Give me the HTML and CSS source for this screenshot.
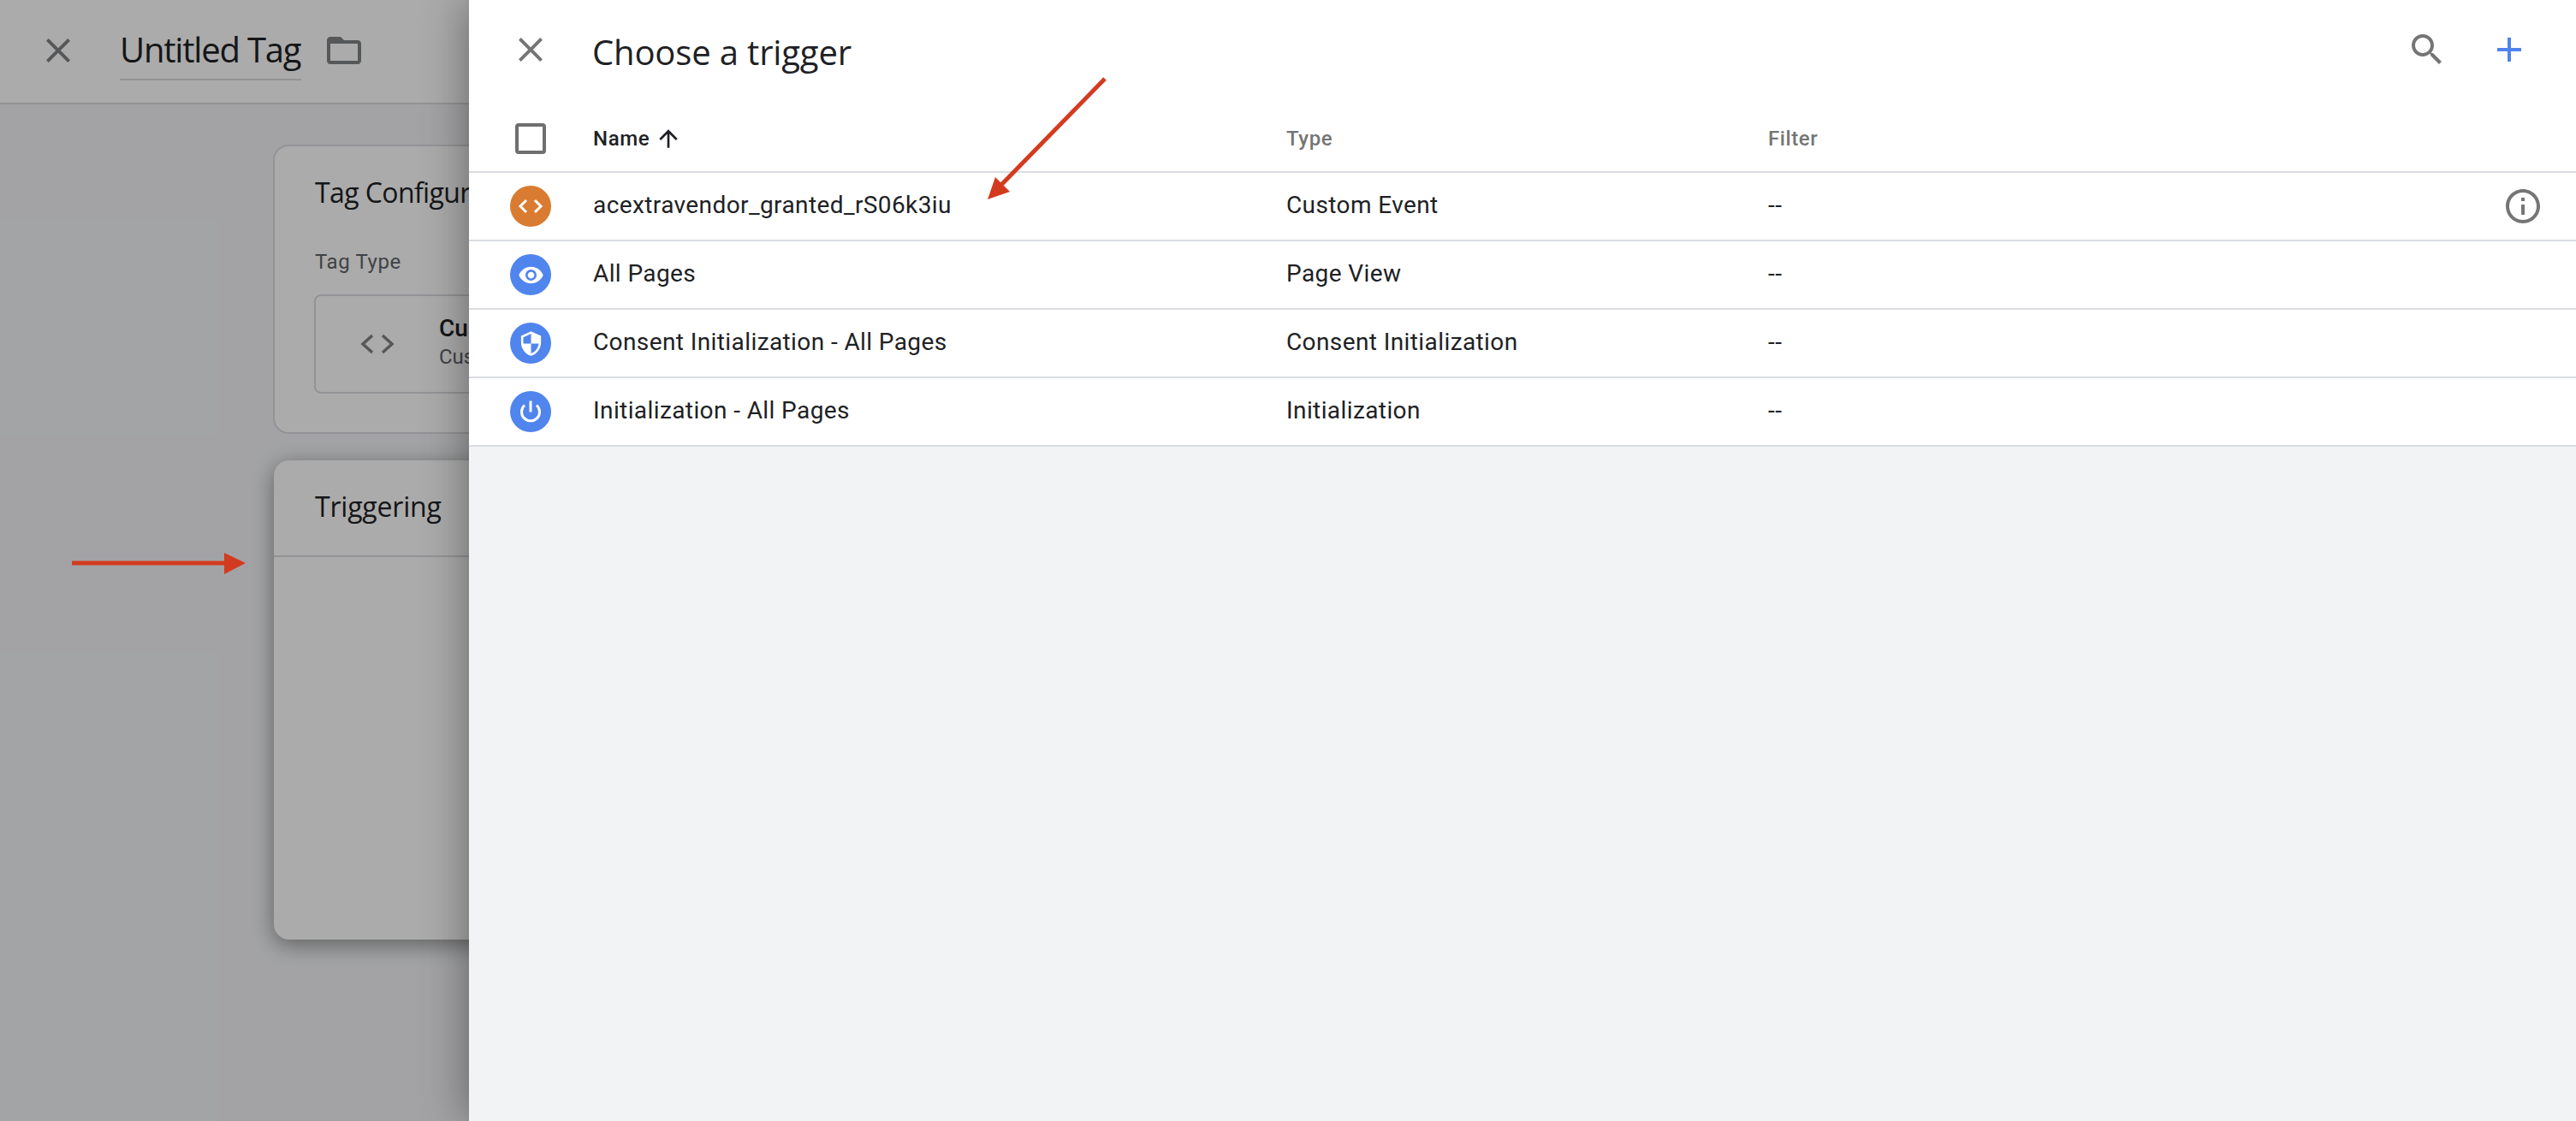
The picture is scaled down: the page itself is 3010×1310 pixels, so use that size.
FILE: index.html
```html
<!DOCTYPE html>
<html lang="en">
<head>
<meta charset="utf-8">
<title>Choose a trigger</title>
<link rel="stylesheet" href="styles.css">
</head>
<body>
<div class="app">
  <div class="page">
    <header class="page-bar">
      <svg class="icon muted" viewBox="0 0 24 24"><path d="M19 6.41L17.59 5 12 10.59 6.41 5 5 6.41 10.59 12 5 17.59 6.41 19 12 13.41 17.59 19 19 17.59 13.41 12z"/></svg>
      <div class="tag-name">Untitled Tag</div>
      <svg class="icon muted folder" viewBox="0 0 24 24"><path d="M20 6h-8l-2-2H4c-1.1 0-1.99.9-1.99 2L2 18c0 1.1.9 2 2 2h16c1.1 0 2-.9 2-2V8c0-1.1-.9-2-2-2zm0 12H4V8h16v10z"/></svg>
    </header>
    <main class="page-main">
      <section class="card config">
        <h2 class="card-title">Tag Configuration</h2>
        <div class="field-label">Tag Type</div>
        <div class="type-box">
          <svg class="type-icon" viewBox="0 0 40 24"><path d="M14 2L3 12l11 10M26 2l11 10-11 10"/></svg>
          <div class="type-text">
            <div class="type-name">Custom HTML</div>
            <div class="type-sub">Custom HTML Tag</div>
          </div>
        </div>
      </section>
      <section class="card trigger">
        <h2 class="trigger-title">Triggering</h2>
      </section>
    </main>
  </div>
  <div class="scrim"></div>
  <aside class="drawer">
    <div class="drawer-bar">
      <svg class="icon grey" viewBox="0 0 24 24"><path d="M19 6.41L17.59 5 12 10.59 6.41 5 5 6.41 10.59 12 5 17.59 6.41 19 12 13.41 17.59 19 19 17.59 13.41 12z"/></svg>
      <h1 class="drawer-title">Choose a trigger</h1>
      <div class="drawer-actions">
        <svg class="icon grey" viewBox="0 0 24 24"><path d="M15.5 14h-.79l-.28-.27C15.41 12.59 16 11.11 16 9.5 16 5.91 13.09 3 9.5 3S3 5.91 3 9.5 5.91 16 9.5 16c1.61 0 3.09-.59 4.23-1.57l.27.28v.79l5 4.99L20.49 19l-4.99-5zm-6 0C7.01 14 5 11.99 5 9.5S7.01 5 9.5 5 14 7.01 14 9.5 11.99 14 9.5 14z"/></svg>
        <svg class="icon blue" viewBox="0 0 24 24"><path d="M19 13h-6v6h-2v-6H5v-2h6V5h2v6h6v2z"/></svg>
      </div>
    </div>
    <div class="table">
      <div class="row head">
        <div class="cell-icon"><span class="checkbox"></span></div>
        <div class="th th-name">Name<svg class="sort" viewBox="0 0 24 24"><path d="M4 12l1.41 1.41L11 7.83V20h2V7.83l5.58 5.59L20 12l-8-8-8 8z"/></svg></div>
        <div class="th">Type</div>
        <div class="th">Filter</div>
      </div>
      <div class="row">
        <div class="cell-icon"><span class="badge orange"><svg class="code" viewBox="0 0 48 48"><path d="M19 17l-7 7 7 7M29 17l7 7-7 7"/></svg></span></div>
        <div class="cell">acextravendor_granted_rS06k3iu</div>
        <div class="cell">Custom Event</div>
        <div class="cell">--</div>
        <svg class="icon grey info" viewBox="0 0 24 24"><path d="M11 7h2v2h-2zm0 4h2v6h-2zm1-9C6.48 2 2 6.48 2 12s4.48 10 10 10 10-4.48 10-10S17.52 2 12 2zm0 18c-4.41 0-8-3.59-8-8s3.59-8 8-8 8 3.59 8 8-3.59 8-8 8z"/></svg>
      </div>
      <div class="row">
        <div class="cell-icon"><span class="badge"><svg class="glyph" viewBox="0 0 24 24"><path d="M12 4.5C7 4.5 2.73 7.61 1 12c1.73 4.39 6 7.5 11 7.5s9.27-3.11 11-7.5c-1.73-4.39-6-7.5-11-7.5zM12 17c-2.76 0-5-2.24-5-5s2.24-5 5-5 5 2.24 5 5-2.24 5-5 5zm0-8c-1.66 0-3 1.34-3 3s1.34 3 3 3 3-1.34 3-3-1.34-3-3-3z"/></svg></span></div>
        <div class="cell">All Pages</div>
        <div class="cell">Page View</div>
        <div class="cell">--</div>
      </div>
      <div class="row">
        <div class="cell-icon"><span class="badge"><svg class="glyph" viewBox="0 0 24 24"><path d="M12 1L3 5v6c0 5.55 3.84 10.74 9 12 5.16-1.26 9-6.45 9-12V5l-9-4zm0 10.99h7c-.53 4.12-3.28 7.79-7 8.94V12H5V6.3l7-3.11v8.8z"/></svg></span></div>
        <div class="cell">Consent Initialization - All Pages</div>
        <div class="cell">Consent Initialization</div>
        <div class="cell">--</div>
      </div>
      <div class="row">
        <div class="cell-icon"><span class="badge"><svg class="power" viewBox="0 0 48 48"><path d="M24 11.500v13M17 16.500a10.500 10.500 0 1 0 14 0"/></svg></span></div>
        <div class="cell">Initialization - All Pages</div>
        <div class="cell">Initialization</div>
        <div class="cell">--</div>
      </div>
    </div>
  </aside>
  <svg class="annotations" viewBox="0 0 3010 1310">
    <path class="shaft" d="M84 658H264"/>
    <polygon class="head" points="262,646 287,658 262,671"/>
    <path class="shaft" d="M1291 92L1168 218"/>
    <polygon class="head" points="1154,233 1163,207 1180,224"/>
  </svg>
</div>
</body>
</html>
```
FILE: styles.css
```css
* { box-sizing: border-box; }
html, body { margin: 0; padding: 0; }
body { background: #f3f4f6; color: #202124; font-family: Roboto, "Liberation Sans", sans-serif; }
h1, h2 { margin: 0; font-weight: 400; }

.app { position: relative; width: 3010px; height: 1310px; overflow: hidden; background: #f3f4f6; }

.icon { width: 48px; height: 48px; flex: none; display: block; }
.grey { fill: #757575; }
.muted { fill: #808285; }
.blue { fill: #4f83ee; }

.page { display: flex; flex-direction: column; height: 100%; }
.page-bar { display: flex; align-items: center; height: 122px; padding: 0 0 2px 44px; background: #fff; border-bottom: 2px solid #dadce0; }
.tag-name { margin: 6px 0 0 48px; width: 212px; height: 64px; font-family: "Open Sans", sans-serif; font-size: 40px; line-height: 56px; letter-spacing: -1.2px; white-space: nowrap; border-bottom: 2px solid #dadce0; }
.folder { margin-left: 26px; }

.page-main { display: flex; flex-direction: column; gap: 31px; padding: 47px 0 0 319px; }
.card { width: 2300px; background: #fff; border-radius: 18px; }
.config { height: 338px; border: 2px solid #dadce0; padding: 32px 47px 0; }
.card-title, .trigger-title { font-family: "Open Sans", sans-serif; font-size: 32px; line-height: 44px; letter-spacing: -.6px; }
.field-label { margin-top: 44px; font-size: 24px; line-height: 30px; color: #5f6368; letter-spacing: .6px; }
.type-box { display: flex; align-items: center; height: 116px; margin: 23px 0 0 -1px; border: 2px solid #dadce0; border-radius: 8px; }
.type-icon { width: 40px; height: 24px; margin-left: 52px; fill: none; stroke: #808285; stroke-width: 3.500; flex: none; }
.type-text { margin: 0 0 6px 52px; }
.type-name { font-size: 28px; line-height: 36px; font-weight: 500; }
.type-sub { font-size: 24px; line-height: 30px; color: #5f6368; }

.trigger { height: 560px; margin-left: 1px; box-shadow: 0 6px 26px rgba(0,0,0,.42); }
.trigger-title { height: 113px; padding: 32px 0 0 48px; border-bottom: 2px solid #dadce0; letter-spacing: -.2px; }

.scrim { position: absolute; inset: 0; background: rgba(0,0,0,.33); }

.drawer { position: absolute; top: 0; left: 548px; right: 0; bottom: 0; background: #f1f3f4; box-shadow: 0 0 50px rgba(0,0,0,.42); }
.drawer-bar { display: flex; align-items: center; height: 116px; padding: 0 54px 0 48px; background: #fff; }
.drawer-title { margin-left: 48px; font-family: "Open Sans", sans-serif; font-size: 40px; line-height: 56px; letter-spacing: -.15px; padding-top: 6px; }
.drawer-actions { display: flex; gap: 48px; margin-left: auto; }

.table { background: #fff; }
.row { position: relative; display: grid; grid-template-columns: 145px 810px 563px 1fr; align-items: center; height: 80px; border-bottom: 2px solid #dadce0; font-size: 28px; letter-spacing: .4px; white-space: nowrap; }
.row.head { height: 86px; padding-top: 8px; }
.cell { padding-bottom: 3px; }
.cell-icon { padding-left: 48px; display: flex; align-items: center; }
.checkbox { display: block; width: 36px; height: 36px; margin-left: 6px; border: 4px solid #6f6f6f; border-radius: 4px; }
.th { font-size: 24px; font-weight: 500; color: #757575; letter-spacing: .6px; }
.th-name { display: flex; align-items: center; color: #202124; }
.sort { width: 32px; height: 32px; margin-left: 6px; fill: #202124; }
.badge { display: flex; align-items: center; justify-content: center; width: 48px; height: 48px; border-radius: 50%; background: #5085ee; }
.badge.orange { background: #d97b30; }
.glyph { width: 31px; height: 31px; fill: #fff; }
.code, .power { width: 48px; height: 48px; fill: none; stroke: #fff; stroke-width: 3; }
.info { position: absolute; right: 38px; top: 15px; }

.annotations { position: absolute; inset: 0; width: 100%; height: 100%; pointer-events: none; }
.shaft { fill: none; stroke: #d33b20; stroke-width: 5; }
.head { fill: #d33b20; }
```
